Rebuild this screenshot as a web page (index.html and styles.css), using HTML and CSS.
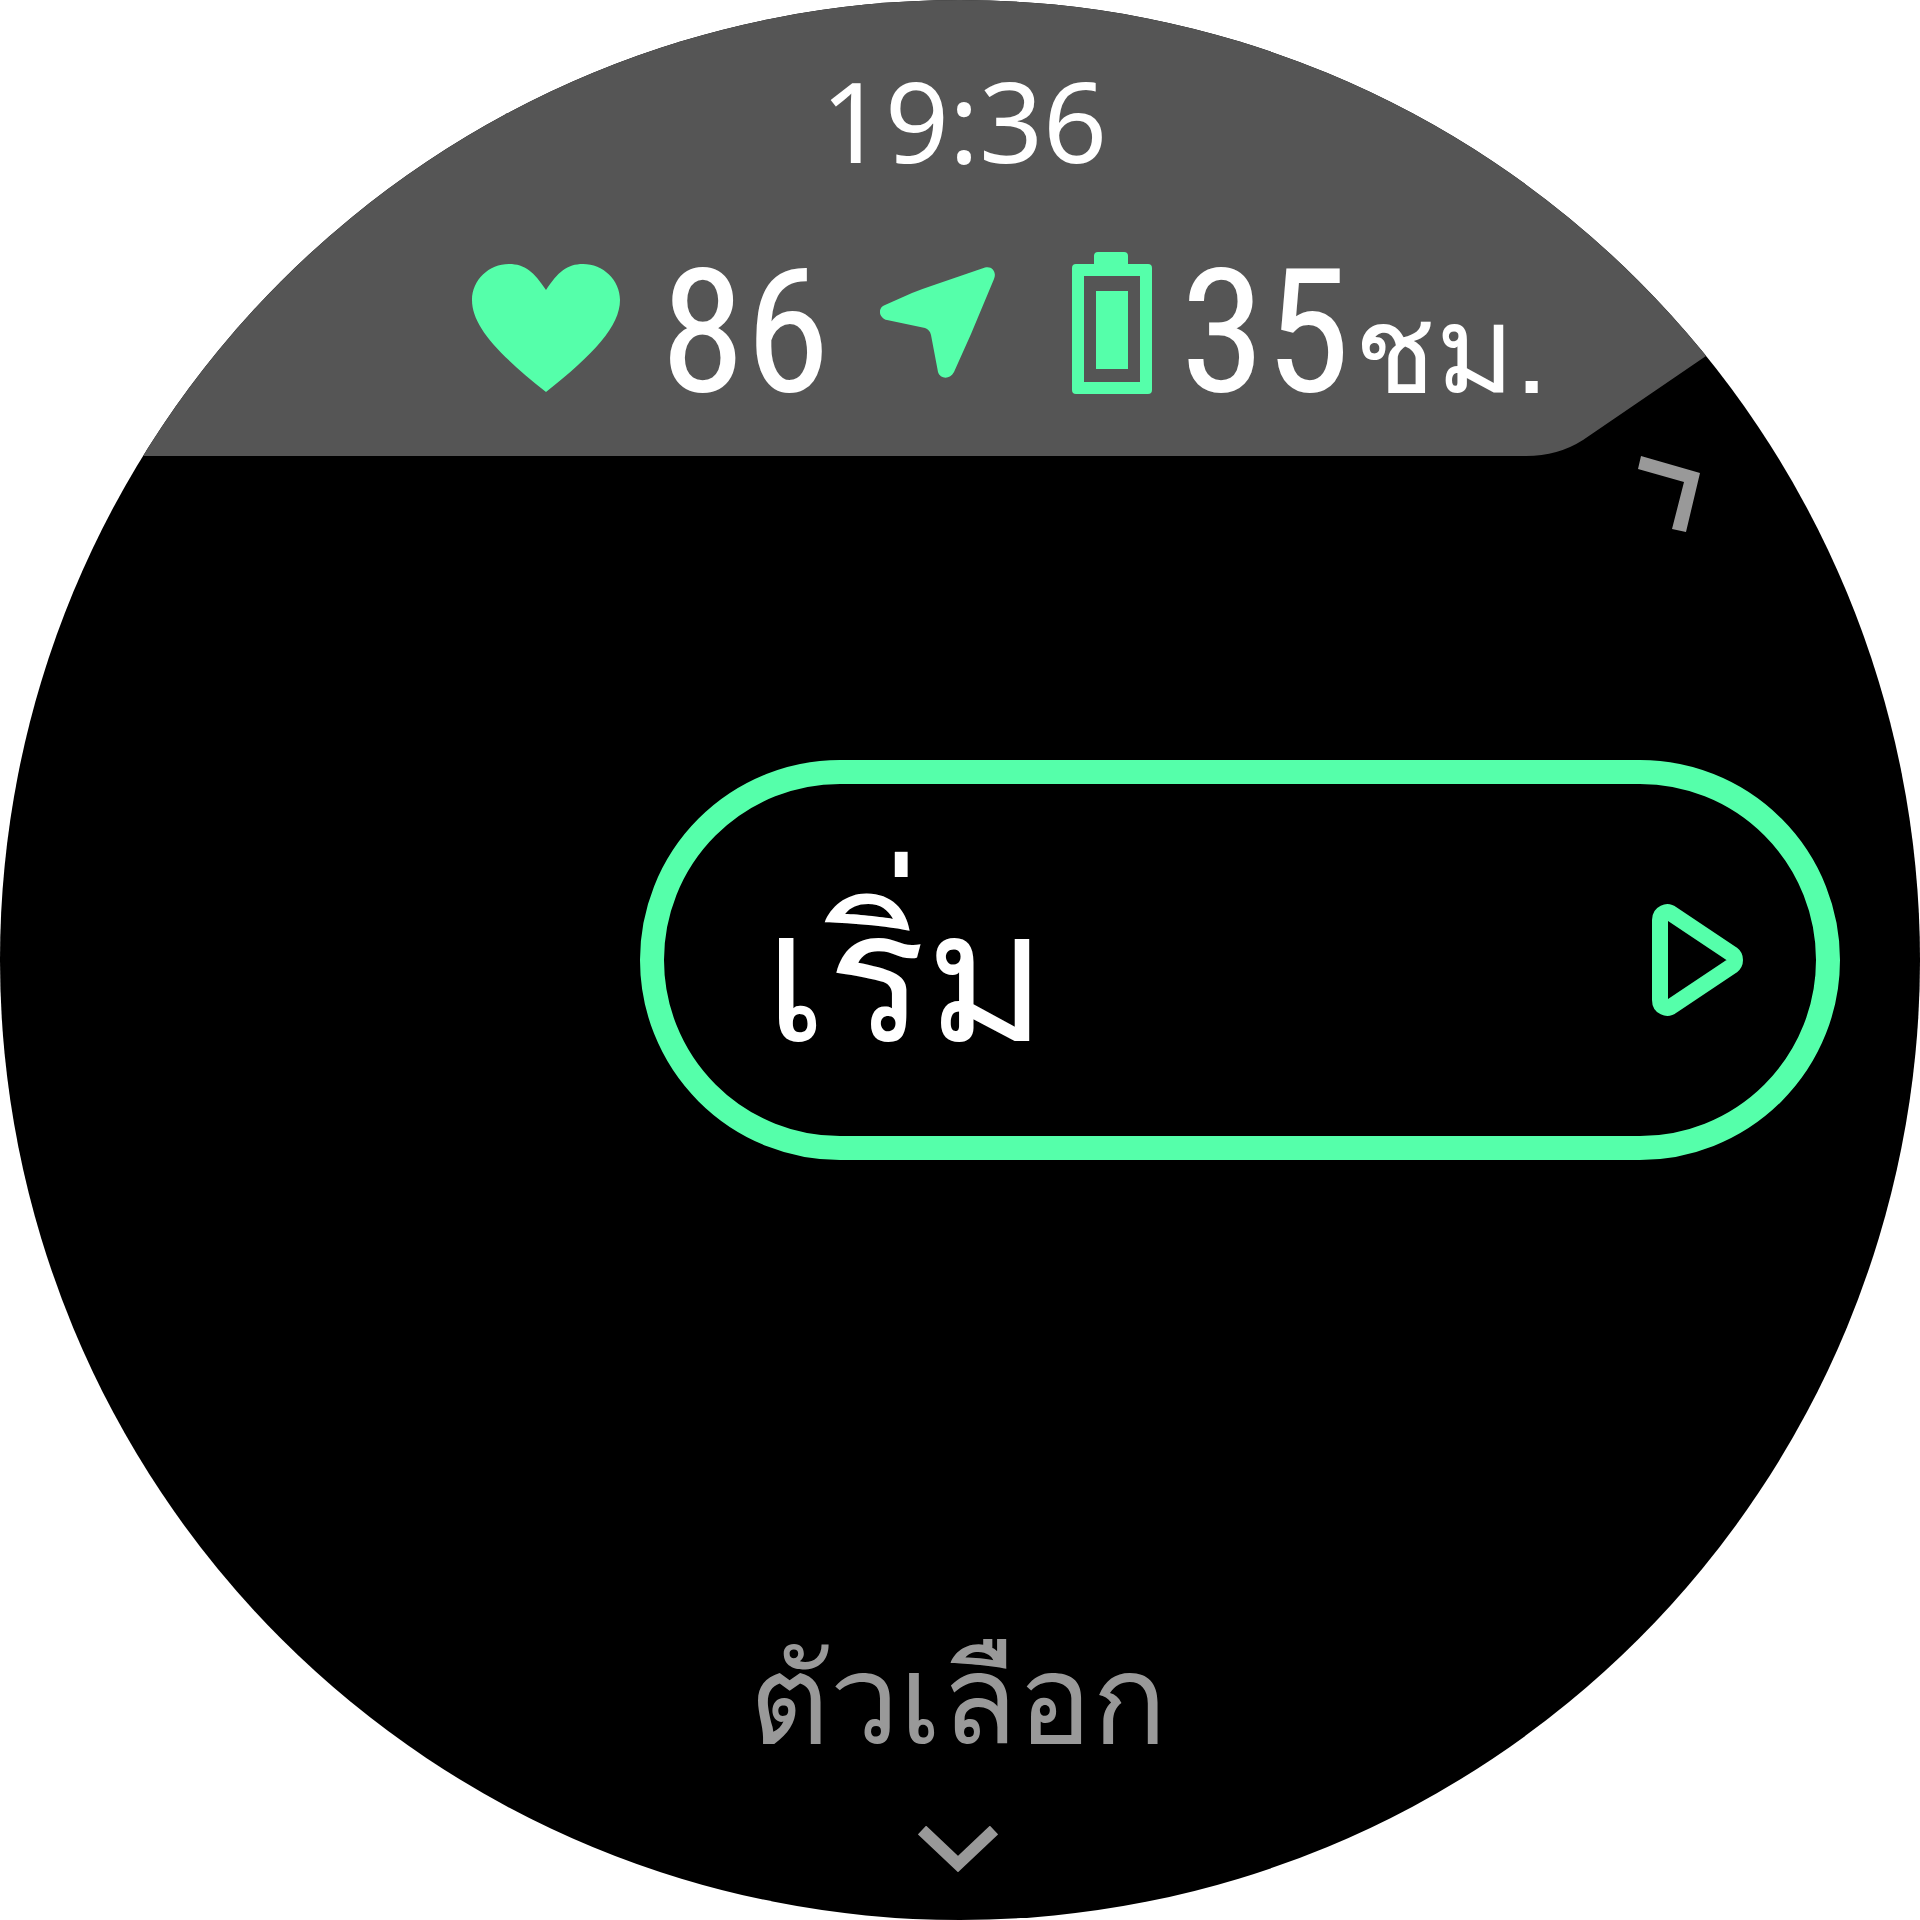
FILE: index.html
```html
<!DOCTYPE html>
<html lang="th">
<head>
  <meta charset="utf-8">
  <meta name="viewport" content="width=device-width, initial-scale=1">
  <title>เริ่ม</title>
  <link rel="stylesheet" href="styles.css">
</head>
<body>
  <main class="watch">
    <header class="header">
      <svg class="header-shape" viewBox="0 0 1920 456" preserveAspectRatio="none" aria-hidden="true">
        <path d="M0 0H1920V210L1706 356L1583 440Q1558 456 1526 456H0Z" fill="#555"/>
      </svg>
      <time class="time">19:36</time>
      <div class="status">
        <svg class="heart" viewBox="0 0 148 128" aria-hidden="true">
          <path d="M74 26C62 8 53 0 37 0C17 0 0 16 0 36C0 62 26 90 74 128C122 90 148 62 148 36C148 16 131 0 111 0C95 0 86 8 74 26Z"/>
        </svg>
        <span class="value pulse">86</span>
        <svg class="arrow" viewBox="0 0 116 111" aria-hidden="true">
          <path d="M105 0.500C112 -1.500 117 5 114 12L91 67L74 105C70 113 60 112 58 105L51 68C50 64 48 62 45 61L7 53C-1 51 -3 41 5 38L32 26Q42 22 54 18Z"/>
        </svg>
        <svg class="battery" viewBox="0 0 80 142" aria-hidden="true">
          <path fill-rule="evenodd" d="M26 0H52Q56 0 56 4V12H76Q80 12 80 16V138Q80 142 76 142H4Q0 142 0 138V16Q0 12 4 12H22V4Q22 0 26 0ZM12 24V130H68V24ZM24 39H56V117H24Z"/>
        </svg>
        <span class="value hours">35</span>
        <span class="unit">ชม.</span>
      </div>
    </header>
    <section class="body">
      <button class="start" type="button">
        <span class="start-label">เริ่ม</span>
        <svg class="play" viewBox="0 0 92 112" aria-hidden="true">
          <path d="M8 16V96C8 103 15 106 20 102L80 62C84 59 84 53 80 50L20 10C15 6 8 9 8 16Z"/>
        </svg>
      </button>
    </section>
    <footer class="footer">
      <button class="options" type="button">
        <span>ตัวเลือก</span>
        <svg class="down" viewBox="0 0 80 46" aria-hidden="true">
          <path d="M4 4L40 38L76 4"/>
        </svg>
      </button>
    </footer>
    <svg class="corner" viewBox="0 0 62 76" aria-hidden="true">
      <path d="M3 0L62 17L48 76L34 73L46 26L0 13Z"/>
    </svg>
  </main>
</body>
</html>
```
FILE: styles.css
```css
* { box-sizing: border-box; }

body {
  margin: 0;
  background: #fff;
  color: #fff;
  font-family: "Loma", "Noto Sans", sans-serif;
}

button {
  padding: 0;
  border: 0;
  background: none;
  color: inherit;
  font: inherit;
  cursor: pointer;
}

svg { display: block; flex: none; }

.watch {
  position: relative;
  display: grid;
  grid-template-rows: 456px 1fr 456px;
  width: min(100vw, 100vh);
  aspect-ratio: 1;
  margin: 0 auto;
  background: #000;
  clip-path: circle(50%);
}

.header {
  position: relative;
  display: flex;
  flex-direction: column;
  align-items: center;
  justify-content: space-between;
  padding: 64px 0 62px;
}

.header-shape {
  position: absolute;
  inset: 0;
  width: 100%;
  height: 100%;
}

.time {
  position: relative;
  padding-left: 8px;
  font-family: "Noto Sans", sans-serif;
  font-size: 112px;
  line-height: 112px;
}

.status {
  position: relative;
  display: flex;
  align-items: flex-end;
  width: 100%;
  height: 142px;
  padding-left: 24.6%;
  fill: #5fa;
  white-space: nowrap;
}

.heart { width: 148px; height: 128px; margin-bottom: 2px; }

.value {
  font-family: "Roboto Condensed", "Roboto", sans-serif;
  font-size: 172px;
  line-height: 124px;
}

.pulse { width: 220px; margin-left: 40px; }

.arrow { width: 116px; height: 111px; margin: 0 76px 16px 0; }

.battery { width: 80px; height: 142px; }

.hours { width: 174px; margin-left: 28px; }

.unit {
  font-size: 120px;
  line-height: 88px;
}

.body {
  display: flex;
  align-items: center;
  padding: 0 80px 0 33.333%;
}

.start {
  flex: 1;
  display: flex;
  align-items: center;
  justify-content: space-between;
  height: 400px;
  padding: 0 72px 0 100px;
  border: 24px solid #5fa;
  border-radius: 200px;
  font-size: 184px;
  line-height: 240px;
}

.start-label { padding-top: 32px; }

.play {
  width: 92px;
  height: 112px;
  fill: none;
  stroke: #5fa;
  stroke-width: 16px;
}

.footer {
  display: flex;
  align-items: flex-end;
  justify-content: center;
  padding: 0 4px 48px 0;
}

.options {
  display: flex;
  flex-direction: column;
  align-items: center;
  gap: 46px;
  color: #999;
  font-size: 124px;
  line-height: 160px;
}

.down {
  width: 80px;
  height: 46px;
  fill: none;
  stroke: #999;
  stroke-width: 12px;
}

.corner {
  position: absolute;
  top: 456px;
  left: 85.3%;
  width: 62px;
  height: 76px;
  fill: #999;
}
```
